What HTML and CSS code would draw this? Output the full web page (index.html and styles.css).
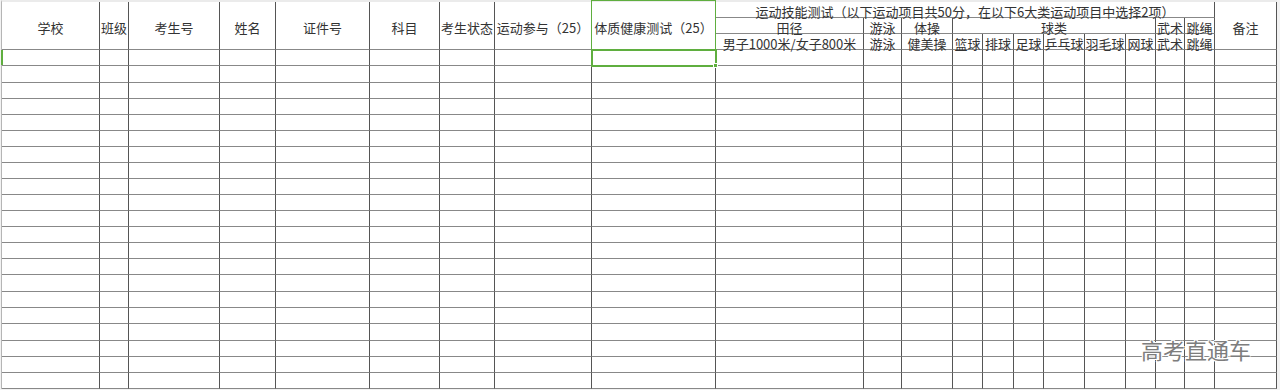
FILE: index.html
```html
<!DOCTYPE html>
<html lang="zh">
<head>
<meta charset="utf-8">
<title>运动技能测试登记表</title>
<link rel="stylesheet" href="styles.css">
</head>
<body>
<div class="sheet">
  <div class="h r3">学校</div>
  <div class="h r3">班级</div>
  <div class="h r3">考生号</div>
  <div class="h r3">姓名</div>
  <div class="h r3">证件号</div>
  <div class="h r3">科目</div>
  <div class="h r3">考生状态</div>
  <div class="h r3">运动参与（25）</div>
  <div class="h r3 selcol">体质健康测试（25）</div>
  <div class="h c11">运动技能测试（以下运动项目共50分，在以下6大类运动项目中选择2项）</div>
  <div class="h r3">备注</div>

  <div class="h">田径</div>
  <div class="h">游泳</div>
  <div class="h">体操</div>
  <div class="h c6">球类</div>
  <div class="h">武术</div>
  <div class="h">跳绳</div>

  <div class="h">男子1000米/女子800米</div>
  <div class="h">游泳</div>
  <div class="h">健美操</div>
  <div class="h">篮球</div>
  <div class="h">排球</div>
  <div class="h">足球</div>
  <div class="h">乒乓球</div>
  <div class="h">羽毛球</div>
  <div class="h">网球</div>
  <div class="h">武术</div>
  <div class="h">跳绳</div>

  <i class="rowsel"></i><i></i><i></i><i></i><i></i><i></i><i></i><i></i><i class="sel"></i><i></i><i></i><i></i><i></i><i></i><i></i><i></i><i></i><i></i><i></i><i></i><i></i>
  <i></i><i></i><i></i><i></i><i></i><i></i><i></i><i></i><i></i><i></i><i></i><i></i><i></i><i></i><i></i><i></i><i></i><i></i><i></i><i></i><i></i>
  <i></i><i></i><i></i><i></i><i></i><i></i><i></i><i></i><i></i><i></i><i></i><i></i><i></i><i></i><i></i><i></i><i></i><i></i><i></i><i></i><i></i>
  <i></i><i></i><i></i><i></i><i></i><i></i><i></i><i></i><i></i><i></i><i></i><i></i><i></i><i></i><i></i><i></i><i></i><i></i><i></i><i></i><i></i>
  <i></i><i></i><i></i><i></i><i></i><i></i><i></i><i></i><i></i><i></i><i></i><i></i><i></i><i></i><i></i><i></i><i></i><i></i><i></i><i></i><i></i>
  <i></i><i></i><i></i><i></i><i></i><i></i><i></i><i></i><i></i><i></i><i></i><i></i><i></i><i></i><i></i><i></i><i></i><i></i><i></i><i></i><i></i>
  <i></i><i></i><i></i><i></i><i></i><i></i><i></i><i></i><i></i><i></i><i></i><i></i><i></i><i></i><i></i><i></i><i></i><i></i><i></i><i></i><i></i>
  <i></i><i></i><i></i><i></i><i></i><i></i><i></i><i></i><i></i><i></i><i></i><i></i><i></i><i></i><i></i><i></i><i></i><i></i><i></i><i></i><i></i>
  <i></i><i></i><i></i><i></i><i></i><i></i><i></i><i></i><i></i><i></i><i></i><i></i><i></i><i></i><i></i><i></i><i></i><i></i><i></i><i></i><i></i>
  <i></i><i></i><i></i><i></i><i></i><i></i><i></i><i></i><i></i><i></i><i></i><i></i><i></i><i></i><i></i><i></i><i></i><i></i><i></i><i></i><i></i>
  <i></i><i></i><i></i><i></i><i></i><i></i><i></i><i></i><i></i><i></i><i></i><i></i><i></i><i></i><i></i><i></i><i></i><i></i><i></i><i></i><i></i>
  <i></i><i></i><i></i><i></i><i></i><i></i><i></i><i></i><i></i><i></i><i></i><i></i><i></i><i></i><i></i><i></i><i></i><i></i><i></i><i></i><i></i>
  <i></i><i></i><i></i><i></i><i></i><i></i><i></i><i></i><i></i><i></i><i></i><i></i><i></i><i></i><i></i><i></i><i></i><i></i><i></i><i></i><i></i>
  <i></i><i></i><i></i><i></i><i></i><i></i><i></i><i></i><i></i><i></i><i></i><i></i><i></i><i></i><i></i><i></i><i></i><i></i><i></i><i></i><i></i>
  <i></i><i></i><i></i><i></i><i></i><i></i><i></i><i></i><i></i><i></i><i></i><i></i><i></i><i></i><i></i><i></i><i></i><i></i><i></i><i></i><i></i>
  <i></i><i></i><i></i><i></i><i></i><i></i><i></i><i></i><i></i><i></i><i></i><i></i><i></i><i></i><i></i><i></i><i></i><i></i><i></i><i></i><i></i>
  <i></i><i></i><i></i><i></i><i></i><i></i><i></i><i></i><i></i><i></i><i></i><i></i><i></i><i></i><i></i><i></i><i></i><i></i><i></i><i></i><i></i>
  <i></i><i></i><i></i><i></i><i></i><i></i><i></i><i></i><i></i><i></i><i></i><i></i><i></i><i></i><i></i><i></i><i></i><i></i><i></i><i></i><i></i>
  <i></i><i></i><i></i><i></i><i></i><i></i><i></i><i></i><i></i><i></i><i></i><i></i><i></i><i></i><i></i><i></i><i></i><i></i><i></i><i></i><i></i>
  <i></i><i></i><i></i><i></i><i></i><i></i><i></i><i></i><i></i><i></i><i></i><i></i><i></i><i></i><i></i><i></i><i></i><i></i><i></i><i></i><i></i>
  <i></i><i></i><i></i><i></i><i></i><i></i><i></i><i></i><i></i><i></i><i></i><i></i><i></i><i></i><i></i><i></i><i></i><i></i><i></i><i></i><i></i>

  <div class="watermark">高考直通车</div>
</div>
</body>
</html>
```

FILE: styles.css
```css
html, body {
  margin: 0;
  padding: 0;
}
body {
  background: #f2f2f2;
  font-family: "Noto Sans CJK SC", "Noto Sans", sans-serif;
  color: #333;
  height: 390px;
  overflow: hidden;
}
.sheet {
  position: relative;
  margin-left: 1px;
  width: 1276px;
  box-sizing: border-box;
  background: #fff;
  border-left: 1px solid #b5b5b5;
  border-top: 2px solid #ebebeb;
  display: grid;
  grid-template-columns: 98px 29px 91px 56px 94px 70px 55px 97px 124px 148px 38px 51px 30px 31px 30px 41px 41px 30px 29px 30px 62px;
  grid-template-rows: 16px 16px 16px 16px 17px repeat(12, 16px) 17px 16px 16px 17px 16px 16px 16px;
}
.sheet > .h,
.sheet > i {
  box-sizing: border-box;
  border-right: 1px solid #555;
  border-bottom: 1px solid #888;
}
.sheet > i {
  display: block;
}
.sheet > .h {
  display: flex;
  align-items: center;
  justify-content: center;
  font-size: 13px;
  line-height: 14px;
  white-space: nowrap;
  overflow: visible;
  padding: 4px 0 0;
}
.r3 {
  grid-row: span 3;
}
.c11 {
  grid-column: span 11;
}
.c6 {
  grid-column: span 6;
}
.selcol {
  position: relative;
}
.selcol::after {
  content: "";
  position: absolute;
  left: -1px;
  right: -1px;
  top: -2px;
  bottom: -1px;
  border: 1px solid #5fae3f;
  border-bottom: none;
}
.sel {
  position: relative;
}
.sel::after {
  content: "";
  position: absolute;
  left: -1px;
  top: -1px;
  right: -2px;
  bottom: -2px;
  border: 2px solid #5fae3f;
}
.sel::before {
  content: "";
  position: absolute;
  right: -3px;
  bottom: -3px;
  width: 3px;
  height: 3px;
  background: #5fae3f;
  border: 1px solid #fff;
  z-index: 2;
}
.rowsel {
  position: relative;
}
.rowsel::after {
  content: "";
  position: absolute;
  left: -1px;
  top: 0;
  bottom: 0;
  width: 2px;
  background: #5fae3f;
}
.watermark {
  position: absolute;
  left: 1139px;
  top: 335px;
  font-size: 22px;
  line-height: 24px;
  color: #7d7d7d;
  white-space: nowrap;
  text-shadow: 0 0 1px #fff, 1px 1px 0 #fff, -1px -1px 0 #fff, 1px -1px 0 #fff, -1px 1px 0 #fff;
}
```
